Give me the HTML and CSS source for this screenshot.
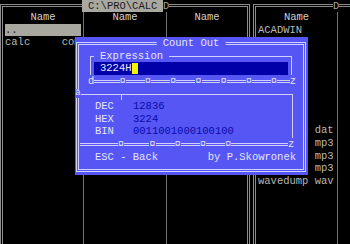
FILE: index.html
```html
<!DOCTYPE html>
<html lang="en">
<head>
  <meta charset="UTF-8" />
  <meta name="viewport" content="width=device-width, initial-scale=1" />
  <title>Count Out</title>
  <link rel="stylesheet" href="styles.css">
</head>
<body>
  <div class="screen">
    <div class="panel panel-left">
      <div class="path">C:\PRO\CALC</div>
      <span class="joint joint-left">D</span>
      <div class="col col-1">
        <div class="col-head">Name</div>
        <div class="file selected">..</div>
        <div class="file">calc     com</div>
      </div>
      <div class="col col-2">
        <div class="col-head">Name</div>
      </div>
      <div class="col col-3">
        <div class="col-head">Name</div>
      </div>
    </div>

    <div class="panel panel-right">
      <span class="joint joint-right">D</span>
      <div class="col col-r1">
        <div class="col-head">Name</div>
        <div class="file">ACADWIN</div>
        <div class="file">BC</div>
        <div class="file">DOS</div>
        <div class="file">GAMES</div>
        <div class="file">MOUSE</div>
        <div class="file">NC</div>
        <div class="file">PRO</div>
        <div class="file">UTILS</div>
        <div class="file">scores   dat</div>
        <div class="file">intro    mp3</div>
        <div class="file">level1   mp3</div>
        <div class="file">theme    mp3</div>
        <div class="file">wavedump wav</div>
      </div>
      <div class="col col-r2"></div>
    </div>
  </div>

  <div class="dialog">
    <div class="frame">
      <div class="dialog-title">Count Out</div>
      <span class="tee">ā</span>

      <div class="group">
        <div class="legend">Expression</div>
        <div class="input"><span>3224H</span><span class="cursor"></span></div>
      </div>
      <div class="rule rule-top"><b>d</b>    <b>¤</b>   <b>¤</b>   <b>¤</b>   <b>¤</b>   <b>¤</b>   <b>¤</b>   <b>¤</b>  <b>z</b></div>

      <div class="values">
        <span>DEC</span><span class="num">12836</span>
        <span>HEX</span><span class="num">3224</span>
        <span>BIN</span><span class="num">0011001000100100</span>
      </div>
      <div class="rule rule-bottom">      <b>¤</b>    <b>¤</b>   <b>¤</b>   <b>¤</b>   <b>¤</b>         <b>z</b></div>

      <div class="foot">
        <span>ESC - Back</span>
        <span>by P.Skowronek</span>
      </div>
    </div>
  </div>
</body>
</html>
```

FILE: styles.css
```css
* {
  box-sizing: border-box;
  margin: 0;
  padding: 0;
}

body {
  background: #000;
  color: #b8b8b8;
  font-family: 'Liberation Mono', 'DejaVu Sans Mono', monospace;
  font-size: 10.5px;
  line-height: 12.6px;
  width: 350px;
  height: 244px;
  overflow: hidden;
  position: relative;
}

/* file panels */
.screen {
  display: flex;
}

.panel {
  position: relative;
  display: flex;
  flex-shrink: 0;
  margin-top: 4px;
  height: 260px;
  border-top: 3px double #8c8c8c;
  border-left: 3px double #8c8c8c;
}

.panel-left {
  width: 250px;
  border-right: 3px double #8c8c8c;
}

.panel-right {
  width: 130px;
  margin-left: 3px;
}

.path {
  position: absolute;
  top: -7px;
  left: 79px;
  padding: 0 6px;
  line-height: 12px;
  background-color: #a8a8a0;
  color: #1c1c1c;
}

.joint {
  position: absolute;
  top: -7px;
  line-height: 12px;
  background-color: #000;
  color: #a0a0a0;
}

.joint-left {
  left: 160px;
}

.joint-right {
  left: 77px;
}

.col {
  padding-top: 4px;
}

.col-1 {
  width: 81px;
  border-right: 1px solid #707070;
}

.col-2 {
  width: 83px;
  border-right: 1px solid #707070;
}

.col-3 {
  flex: 1;
}

.col-r1 {
  width: 82px;
  border-right: 1px solid #707070;
}

.col-r2 {
  flex: 1;
}

.col-head {
  text-align: center;
  color: #d0d0d0;
}

.file {
  margin: 0 2px;
  white-space: pre;
}

.file.selected {
  background-color: #a8a8a0;
  color: #202020;
}

/* dialog */
.dialog {
  position: absolute;
  left: 75px;
  top: 37px;
  width: 233px;
  height: 138px;
  padding: 5px 2px 3px 1px;
  background-color: #5656f4;
  color: #e4e4ff;
  display: flex;
  flex-direction: column;
}

.frame {
  position: relative;
  flex: 1;
  border: 3px double #d0d0ff;
}

.dialog-title {
  position: absolute;
  top: -8px;
  left: 50%;
  transform: translateX(-50%);
  padding: 0 6px;
  line-height: 12px;
  white-space: pre;
  background-color: #5656f4;
}

.tee {
  position: absolute;
  left: -4px;
  top: 44px;
  width: 6px;
  font-size: 9px;
  line-height: 9px;
  text-align: center;
  background-color: #5656f4;
}

.group {
  position: relative;
  margin: 11px 11px 0 11px;
  padding: 5px 3px 0 3px;
  border: 1px solid #d0d0ff;
  border-bottom: none;
}

.legend {
  position: absolute;
  top: -7px;
  left: 3px;
  padding: 0 6px;
  line-height: 12px;
  background-color: #5656f4;
}

.input {
  display: flex;
  align-items: center;
  height: 13px;
  padding-left: 6px;
  background-color: #0000a8;
  color: #e8e8ff;
}

.cursor {
  width: 6px;
  height: 11px;
  background-color: #f4f400;
}

.rule {
  width: fit-content;
  height: 12px;
  line-height: 12px;
  white-space: pre;
  background:
    linear-gradient(#d0d0ff, #d0d0ff) 0 5px / 100% 1px no-repeat,
    linear-gradient(#d0d0ff, #d0d0ff) 0 7px / 100% 1px no-repeat;
}

.rule b {
  font-weight: normal;
  background-color: #5656f4;
}

.rule-top {
  margin-left: 9px;
}

.rule-bottom {
  margin-left: 1px;
}

.values {
  display: grid;
  grid-template-columns: 38px auto;
  margin: 7px 10px 0 0;
  padding: 5px 0 0 16px;
  line-height: 12.5px;
  border-top: 1px solid #d0d0ff;
  border-right: 1px solid #d0d0ff;
  background: linear-gradient(#d0d0ff, #d0d0ff) 42px 0 / 1px 5px no-repeat;
}

.num {
  color: #0a0aa8;
}

.foot {
  display: flex;
  justify-content: space-between;
  margin-top: 1px;
  padding: 0 7px 0 16px;
}
```
